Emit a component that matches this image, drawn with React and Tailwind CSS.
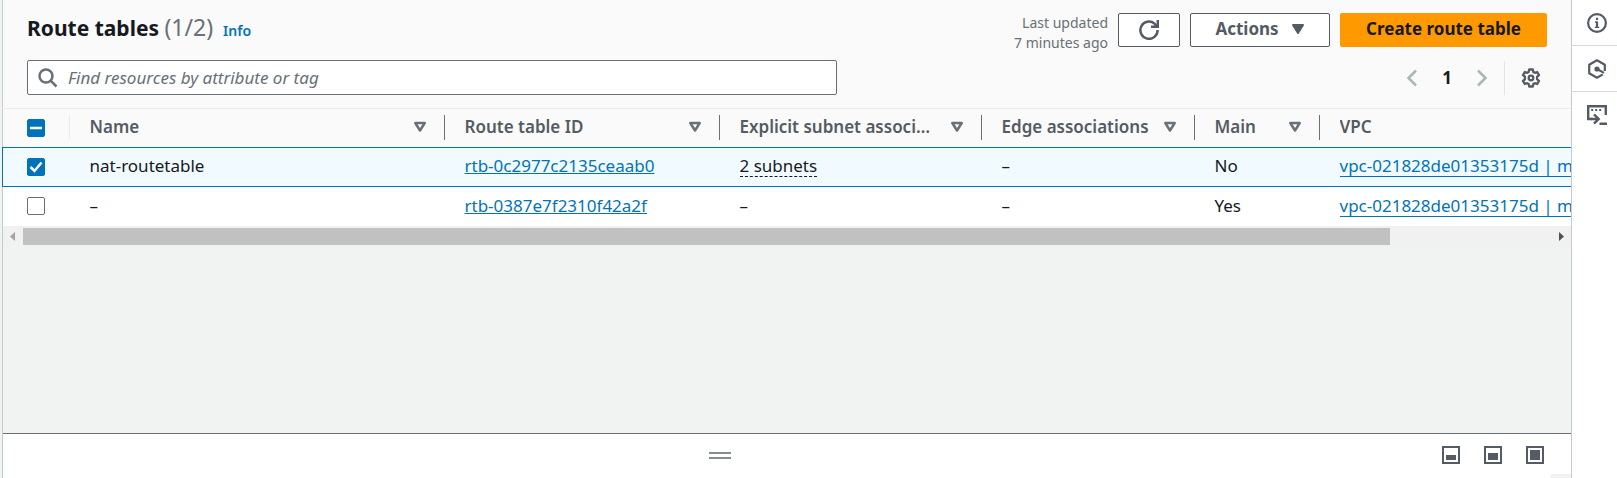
import { useEffect, useRef } from "react";

const routeTables = [
  { name: "nat-routetable", id: "rtb-0c2977c2135ceaab0", subnets: "2 subnets", main: "No", vpc: "vpc-021828de01353175d | main-vpc", selected: true },
  { name: "–", id: "rtb-0387e7f2310f42a2f", subnets: "–", main: "Yes", vpc: "vpc-021828de01353175d | main-vpc", selected: false },
];

const columns = ["Name", "Route table ID", "Explicit subnet associations", "Edge associations", "Main", "VPC"];

function Check({ label, checked = false, mixed = false }) {
  const ref = useRef(null);
  useEffect(() => {
    ref.current.indeterminate = mixed;
  }, [mixed]);
  return (
    <span className="grid size-[18px]">
      <input
        ref={ref}
        type="checkbox"
        aria-label={label}
        defaultChecked={checked}
        className="peer col-start-1 row-start-1 size-[18px] appearance-none rounded-xs border border-[#687078] bg-white checked:border-[#0073bb] checked:bg-[#0073bb] indeterminate:border-[#0073bb] indeterminate:bg-[#0073bb]"
      />
      <svg viewBox="0 0 18 18" className="pointer-events-none col-start-1 row-start-1 size-[18px] fill-none stroke-white stroke-[2.5]">
        {mixed ? <path d="M3 9h12" /> : checked ? <path d="M3.5 9l4 4L14.5 4.5" /> : null}
      </svg>
    </span>
  );
}

function SortIcon() {
  return (
    <svg viewBox="0 0 14 12" className="h-3 w-3.5 shrink-0 fill-none stroke-[#687078] stroke-[2.5]" strokeLinejoin="round">
      <path d="M2.3 2h9.4L7 9.5z" />
    </svg>
  );
}

function PanelIcon({ y }) {
  return (
    <svg viewBox="0 0 18 18" className="size-[18px]">
      <rect x="1" y="1" width="16" height="16" fill="none" stroke="#545b64" strokeWidth="2" />
      <rect x="4" y={y} width="10" height={14 - y} fill="#545b64" />
    </svg>
  );
}

export default function App() {
  return (
    <div className="flex min-h-screen overflow-hidden bg-[#f1f3f3] pl-0.5 font-['Noto_Sans',sans-serif] text-[17px] leading-[22px] text-[#16191f]">
      <main className="flex min-w-0 flex-1 flex-col border-x border-[#c4cbcb]">
        <section>
          <div className="bg-[#fafafa] px-6 pb-[13px] pt-3">
            <div className="flex items-start justify-between">
              <div className="flex items-baseline">
                <h1 className="text-[21px] font-bold leading-[30px]">
                  Route tables <span className="text-[23px] font-normal text-[#687078]">(1/2)</span>
                </h1>
                <a href="#info" className="ml-2.5 text-[14px] font-semibold text-[#0073bb]">Info</a>
              </div>
              <div className="flex gap-2.5">
                <p className="pt-px text-right text-[14px] leading-5 text-[#687078]">
                  Last updated
                  <br />7 minutes ago
                </p>
                <div className="flex gap-2.5 pt-px">
                  <button aria-label="Refresh" className="flex h-[34px] w-[62px] items-center justify-center rounded-xs border border-[#545b64] bg-white">
                    <svg viewBox="0 0 20 20" className="size-5 fill-none stroke-[#545b64] stroke-[2.5]">
                      <path d="M18.600 10A8.600 8.600 0 1 1 15.500 3.600L18 6.500" />
                      <path d="M18.800 0v6.800H12" />
                    </svg>
                  </button>
                  <button className="flex h-[34px] w-[140px] items-center justify-center gap-3 rounded-xs border border-[#545b64] bg-white pb-0.5 font-bold text-[#545b64]">
                    Actions
                    <svg viewBox="0 0 14 12" className="h-3 w-3.5 fill-[#545b64] stroke-[#545b64] stroke-[2]" strokeLinejoin="round">
                      <path d="M2 2h10L7 10z" />
                    </svg>
                  </button>
                  <button className="h-[34px] w-[207px] rounded-xs bg-[#ff9900] pb-0.5 font-bold">Create route table</button>
                </div>
              </div>
            </div>
            <div className="mt-[7px] flex items-center justify-between">
              <label className="flex h-[35px] w-[810px] items-center rounded-xs border border-[#687078] bg-white pl-2.5">
                <svg viewBox="0 0 20 20" className="size-5 shrink-0 fill-none stroke-[#687078] stroke-[2.5]">
                  <circle cx="8" cy="8" r="6.5" />
                  <path d="M12.6 12.6l5.9 5.9" />
                </svg>
                <input
                  type="search"
                  aria-label="Find resources"
                  placeholder="Find resources by attribute or tag"
                  className="ml-2.5 min-w-0 flex-1 outline-none placeholder:italic placeholder:text-[#687078]"
                />
              </label>
              <nav aria-label="Pages" className="flex items-center">
                <button aria-label="Previous page" className="text-[#aab7b8]">
                  <svg viewBox="0 0 12 18" className="h-[18px] w-3 fill-none stroke-current stroke-[2.5]"><path d="M10 1.5L2.5 9l7.500 7.500" /></svg>
                </button>
                <button aria-current="page" className="w-[58px] font-bold">1</button>
                <button aria-label="Next page" className="text-[#aab7b8]">
                  <svg viewBox="0 0 12 18" className="h-[18px] w-3 fill-none stroke-current stroke-[2.5]"><path d="M2 1.500L9.500 9 2 16.500" /></svg>
                </button>
                <span className="ml-4 h-[34px] w-px bg-[#e1e4e6]" />
                <button aria-label="Preferences" className="ml-4 mr-1.5">
                  <svg viewBox="0 0 20 20" className="size-5 fill-none stroke-[#545b64] stroke-[2.3]" strokeLinejoin="round">
                    <path d="M8.200 1.500h3.600l.5 2.400 1.500.9 2.400-.8 1.800 3.100-1.900 1.600v2.600l1.900 1.600-1.800 3.100-2.400-.8-1.500.9-.5 2.400H8.200l-.5-2.400-1.500-.9-2.400.8L2 12.900l1.900-1.600V8.700L2 7.100 3.800 4l2.400.8 1.500-.9z" />
                    <circle cx="10" cy="10" r="2.300" />
                  </svg>
                </button>
              </nav>
            </div>
          </div>

          <div className="-ml-px overflow-hidden border-t border-[#eaeded]">
            <table className="w-[1757px] table-fixed border-collapse text-left">
              <colgroup>
                <col className="w-[67px]" />
                <col className="w-[375px]" />
                <col className="w-[275px]" />
                <col className="w-[262px]" />
                <col className="w-[213px]" />
                <col className="w-[125px]" />
                <col />
              </colgroup>
              <thead className="bg-[#fafafa] text-[#545b64]">
                <tr className="h-[38px]">
                  <th className="p-0">
                    <div className="flex h-[25px] items-center border-r border-[#eaeded] pl-6">
                      <Check label="Select all route tables" mixed />
                    </div>
                  </th>
                  {columns.map((column) => (
                    <th key={column} className="p-0 font-semibold">
                      <div className="flex h-[25px] items-center justify-between gap-3 border-r border-[#687078] pb-0.5 pl-5 pr-[17px]">
                        <span className="truncate">{column}</span>
                        <SortIcon />
                      </div>
                    </th>
                  ))}
                </tr>
              </thead>
              <tbody>
                {routeTables.map((row) => (
                  <tr key={row.id} className={row.selected ? "h-[39px] border border-[#0073bb] bg-[#f1faff]" : "h-10 bg-white"}>
                    <td className="p-0 pl-6">
                      <Check label={"Select " + row.id} checked={row.selected} />
                    </td>
                    <td className="p-0 pb-px pl-5">{row.name}</td>
                    <td className="p-0 pb-px pl-5">
                      <a href={"#" + row.id} className="text-[#0073bb] underline">{row.id}</a>
                    </td>
                    <td className="p-0 pb-px pl-5">
                      {row.selected ? <button className="border-b border-dashed border-[#16191f] leading-[21px]">{row.subnets}</button> : row.subnets}
                    </td>
                    <td className="p-0 pb-px pl-5">–</td>
                    <td className="p-0 pb-px pl-5">{row.main}</td>
                    <td className="p-0 pb-px pl-5">
                      <a href="#vpc" className="inline-block whitespace-nowrap border-b border-[#0073bb] leading-[21px] text-[#0073bb]">{row.vpc}</a>
                    </td>
                  </tr>
                ))}
              </tbody>
            </table>
          </div>

          <div className="flex h-[21px] items-center bg-[#f1f1f1]">
            <svg viewBox="0 0 20 17" className="h-[17px] w-5 shrink-0 fill-[#a3a3a3]"><path d="M12 4v9L7 8.500z" /></svg>
            <div className="flex-1">
              <div className="h-[17px] w-[89.3%] bg-[#c1c1c1]" />
            </div>
            <svg viewBox="0 0 17 17" className="h-[17px] w-[17px] shrink-0 fill-[#505050]"><path d="M5 4v9l5-4.500z" /></svg>
          </div>
        </section>

        <section aria-label="Details panel" className="relative mt-auto flex h-[45px] items-start border-t border-[#687078] bg-white">
          <div className="flex flex-1 justify-center pt-[18px]">
            <button aria-label="Resize panel" className="h-[7px] w-[22px] border-y-2 border-[#878c93]" />
          </div>
          <div className="flex gap-6 pl-1.5 pr-[27px] pt-3">
            <button aria-label="Small panel"><PanelIcon y={9} /></button>
            <button aria-label="Medium panel"><PanelIcon y={7} /></button>
            <button aria-label="Full panel"><PanelIcon y={4} /></button>
          </div>
          <span className="absolute bottom-0 right-0 h-1 w-5 bg-[#f1f1f1]" />
        </section>
      </main>

      <aside className="flex w-[45px] flex-col divide-y divide-[#d5dbdb] bg-white">
        <button aria-label="Info" className="flex h-[46px] items-center justify-center pl-1">
          <svg viewBox="0 0 20 20" className="size-5 fill-none stroke-[#545b64] stroke-[2.2]">
            <circle cx="10" cy="10" r="8.900" />
            <path d="M10 8.500v6M10 4.800v2.200" />
            <path d="M8 9h2M7.800 14.400h4.400" strokeWidth="1.300" />
          </svg>
        </button>
        <button aria-label="Diagnostics" className="flex h-[46px] items-center justify-center pl-1">
          <svg viewBox="0 0 20 20" className="size-5 fill-none stroke-[#545b64] stroke-[2.2]" strokeLinejoin="round">
            <path d="M17.800 12V5.700L10 1.300 2.200 5.700v8.600L10 18.700l5.800-3.300" />
            <path d="M10 10l7 3.800" strokeWidth="2" />
            <circle cx="10" cy="10" r="1.500" fill="#545b64" />
          </svg>
        </button>
        <button aria-label="CloudShell" className="flex h-[46px] items-center justify-center pl-1">
          <svg viewBox="0 0 20 20" className="size-5 fill-none stroke-[#545b64] stroke-[2.4]">
            <path d="M5 14H1.200V1.200h17.600V10" />
            <path d="M4.200 5h2M8.200 5h2M12.200 5h2" strokeWidth="2" />
            <path d="M4 14h7M7 9.300l4.700 4.700L7 18.700M12.500 18.800H20" />
          </svg>
        </button>
      </aside>
    </div>
  );
}
